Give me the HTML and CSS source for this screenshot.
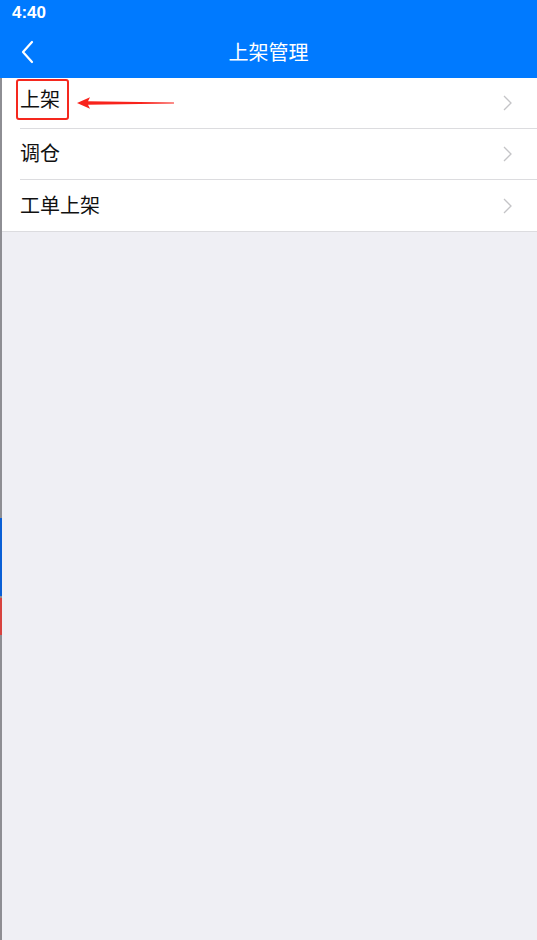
FILE: index.html
```html
<!DOCTYPE html>
<html>
<head>
<meta charset="utf-8">
<link rel="stylesheet" href="styles.css">
</head>
<body>
<div class="screen">
  <div class="status">4:40</div>
  <div class="nav">
    <svg class="back" width="14" height="24" viewBox="0 0 14 24"><path d="M12 2 L3 12 L12 22" fill="none" stroke="#fff" stroke-width="2.2" stroke-linecap="round" stroke-linejoin="round"/></svg>
    <div class="title">上架管理</div>
  </div>
  <div class="content">
    <div class="list">
      <div class="row">
        <span class="label highlighted">上架</span>
        <svg class="chev" width="9" height="16" viewBox="0 0 9 16"><path d="M1 1 L8 8 L1 15" fill="none" stroke="#c4c4c7" stroke-width="1.3"/></svg>
        <svg class="arrow" width="98" height="14" viewBox="0 0 98 14"><polygon points="0,7 13,1.2 11,5.2 97,6.6 97,7.4 11,8.8 13,12.8" fill="#f8231c"/></svg>
      </div>
      <div class="row">
        <span class="label">调仓</span>
        <svg class="chev" width="9" height="16" viewBox="0 0 9 16"><path d="M1 1 L8 8 L1 15" fill="none" stroke="#c4c4c7" stroke-width="1.3"/></svg>
      </div>
      <div class="row last">
        <span class="label">工单上架</span>
        <svg class="chev" width="9" height="16" viewBox="0 0 9 16"><path d="M1 1 L8 8 L1 15" fill="none" stroke="#c4c4c7" stroke-width="1.3"/></svg>
      </div>
    </div>
    <div class="edge-mark blue"></div>
    <div class="edge-mark red"></div>
  </div>
</div>
</body>
</html>
```
FILE: styles.css
```css
* { box-sizing: border-box; }
html, body { margin: 0; padding: 0; }
body {
  width: 537px;
  height: 940px;
  overflow: hidden;
  font-family: "Noto Sans CJK SC", "Liberation Sans", sans-serif;
  background: #efeff4;
}
.screen { width: 537px; height: 940px; display: flex; flex-direction: column; }
.status {
  height: 27px;
  background: #007aff;
  color: #fff;
  font-family: "Liberation Sans", Arial, sans-serif;
  font-weight: bold;
  font-size: 17px;
  line-height: 25px;
  padding-left: 12px;
}
.nav {
  height: 51px;
  background: #007aff;
  display: flex;
  align-items: center;
  justify-content: center;
  position: relative;
}
.back { position: absolute; left: 20px; top: 13px; }
.title { color: #fff; font-size: 20px; line-height: 24px; margin-top: -2px; }
.content {
  flex: 1;
  position: relative;
  border-left: 2px solid #8e8e93;
  background: #efeff4;
}
.list { background: #fff; border-bottom: 1px solid #dcdcdf; }
.row {
  height: 51px;
  display: flex;
  align-items: center;
  justify-content: space-between;
  margin-left: 18px;
  padding-right: 25px;
  border-bottom: 1px solid #dcdcdf;
  position: relative;
}
.row.last { border-bottom: none; height: 51px; }
.label { font-size: 20px; color: #111; line-height: 24px; margin-top: -2px; }
.label.highlighted {
  border: 2px solid #f5281e;
  border-radius: 3px;
  padding: 6px 7px 7px 2px;
  margin-left: -4px;
  margin-top: -7px;
}
.arrow { position: absolute; left: 57px; top: 18px; }
.edge-mark { position: absolute; left: -2px; width: 2px; }
.edge-mark.blue { top: 440px; height: 78px; background: #0a5fd6; }
.edge-mark.red { top: 520px; height: 37px; background: #d8433f; }
```
